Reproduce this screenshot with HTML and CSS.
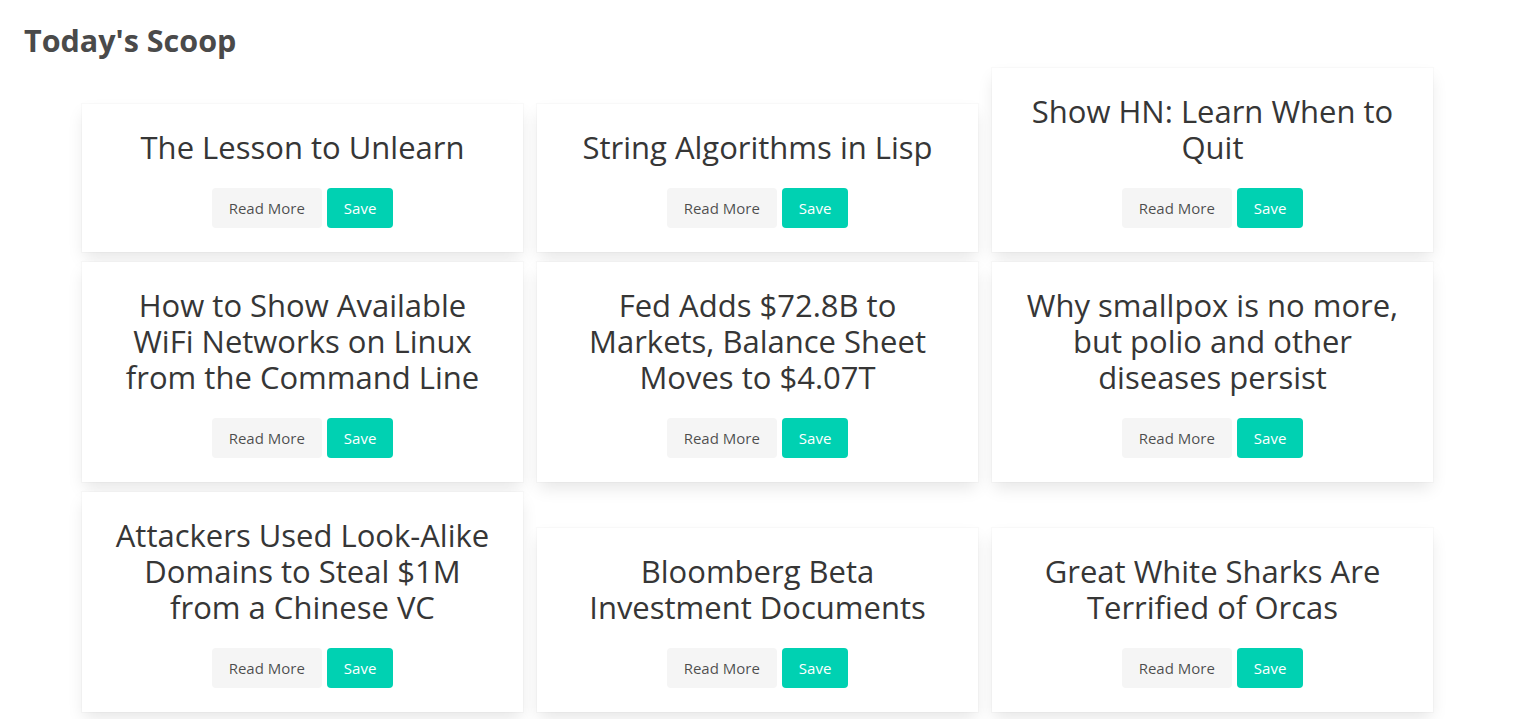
FILE: index.html
```html
<!DOCTYPE html>
<html lang="en">
<head>
<meta charset="utf-8">
<title>Today's Scoop</title>
<link rel="stylesheet" href="styles.css">
</head>
<body>
<main class="page">
  <h1 class="page-title">Today's Scoop</h1>
  <section class="board">
    <article class="card">
      <h2 class="card-title">The Lesson to Unlearn</h2>
      <div class="actions"><button class="btn btn-light">Read More</button><button class="btn btn-primary">Save</button></div>
    </article>
    <article class="card">
      <h2 class="card-title">String Algorithms in Lisp</h2>
      <div class="actions"><button class="btn btn-light">Read More</button><button class="btn btn-primary">Save</button></div>
    </article>
    <article class="card">
      <h2 class="card-title">Show HN: Learn When to Quit</h2>
      <div class="actions"><button class="btn btn-light">Read More</button><button class="btn btn-primary">Save</button></div>
    </article>
    <article class="card">
      <h2 class="card-title">How to Show Available WiFi Networks on Linux from the Command Line</h2>
      <div class="actions"><button class="btn btn-light">Read More</button><button class="btn btn-primary">Save</button></div>
    </article>
    <article class="card">
      <h2 class="card-title">Fed Adds $72.8B to Markets, Balance Sheet Moves to $4.07T</h2>
      <div class="actions"><button class="btn btn-light">Read More</button><button class="btn btn-primary">Save</button></div>
    </article>
    <article class="card">
      <h2 class="card-title">Why smallpox is no more, but polio and other diseases persist</h2>
      <div class="actions"><button class="btn btn-light">Read More</button><button class="btn btn-primary">Save</button></div>
    </article>
    <article class="card">
      <h2 class="card-title">Attackers Used Look-Alike Domains to Steal $1M from a Chinese VC</h2>
      <div class="actions"><button class="btn btn-light">Read More</button><button class="btn btn-primary">Save</button></div>
    </article>
    <article class="card">
      <h2 class="card-title">Bloomberg Beta Investment Documents</h2>
      <div class="actions"><button class="btn btn-light">Read More</button><button class="btn btn-primary">Save</button></div>
    </article>
    <article class="card">
      <h2 class="card-title">Great White Sharks Are Terrified of Orcas</h2>
      <div class="actions"><button class="btn btn-light">Read More</button><button class="btn btn-primary">Save</button></div>
    </article>
  </section>
</main>
</body>
</html>
```

FILE: styles.css
```css
* {
  box-sizing: border-box;
}

html, body {
  margin: 0;
  padding: 0;
  background: #ffffff;
}

body {
  font-family: "Open Sans", "Noto Sans", "Liberation Sans", sans-serif;
  color: #363636;
}

.page {
  padding: 22px 24px 40px 24px;
}

.page-title {
  margin: 0 0 10px 0;
  font-size: 30.5px;
  line-height: 36px;
  font-weight: 700;
  color: #4a4a4a;
}

.board {
  margin-left: 58px;
  display: grid;
  grid-template-columns: repeat(3, 441px);
  column-gap: 14px;
  row-gap: 10px;
  align-items: end;
}

.card {
  background: #ffffff;
  padding: 24px 28px;
  text-align: center;
  box-shadow: 0 8px 16px -2px rgba(10, 10, 10, 0.1), 0 0 0 1px rgba(10, 10, 10, 0.02);
}

.card-title {
  margin: 0 0 23px 0;
  padding-top: 1px;
  font-size: 31px;
  line-height: 36px;
  font-weight: 400;
  color: #363636;
}

.actions {
  display: flex;
  justify-content: center;
  gap: 5px;
}

.btn {
  height: 40px;
  padding: 0 17px;
  border: 0;
  border-radius: 4px;
  font-family: inherit;
  font-size: 15px;
  line-height: 40px;
  cursor: pointer;
}

.btn-light {
  background: #f5f5f5;
  color: rgba(0, 0, 0, 0.7);
}

.btn-primary {
  background: #00d1b2;
  color: #ffffff;
}
```
